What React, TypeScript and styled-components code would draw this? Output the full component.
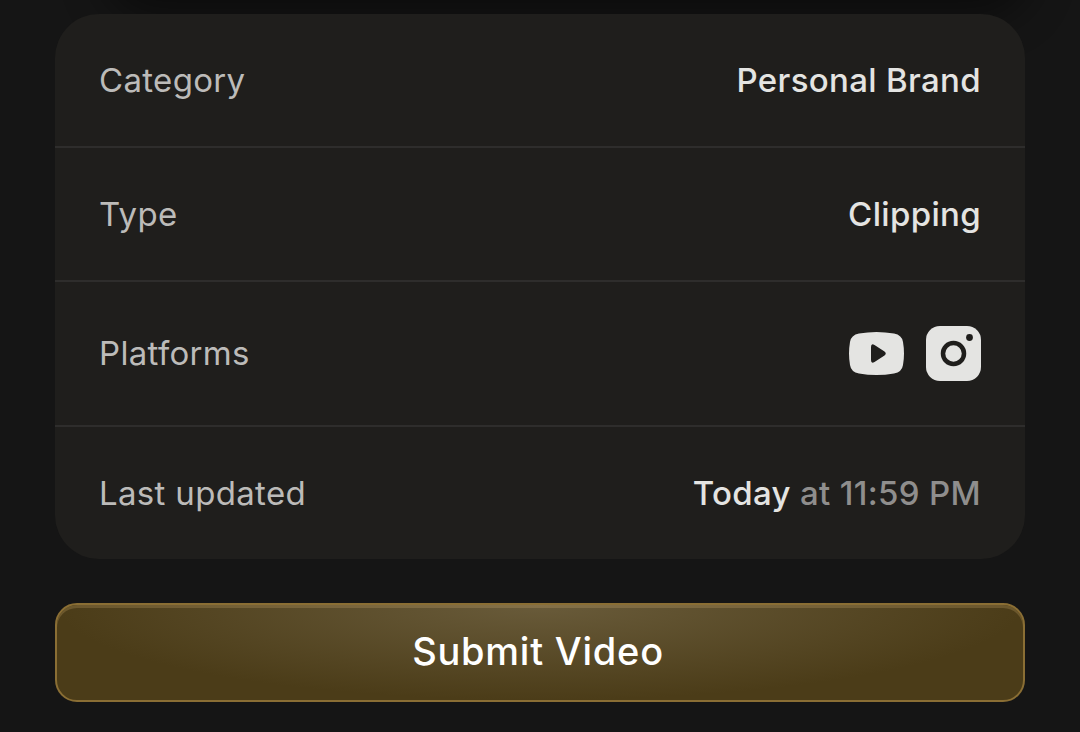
import React from 'react';
import styled, { createGlobalStyle } from 'styled-components';

const Global = createGlobalStyle`
  * { box-sizing: border-box; }
  body { margin: 0; background: #151515; font-family: Inter, sans-serif; }
`;
const Page = styled.main`
  position: relative;
  overflow: hidden;
  padding: 14px 55px 30px;
  /* shadow cast by the panel scrolled off above */
  &::before {
    content: '';
    position: absolute;
    top: -100px;
    left: 110px;
    right: 55px;
    height: 100px;
    border-radius: 44px;
    box-shadow: 0 11px 44px 6px rgba(0, 0, 0, 0.45);
  }
`;
const Card = styled.dl`
  position: relative;
  margin: 0;
  border-radius: 44px;
  background: #1f1e1c;
  overflow: hidden;
`;
const Row = styled.div<{ $tall?: boolean }>`
  display: flex;
  align-items: center;
  justify-content: space-between;
  padding: 44px;
  font-size: 33px;
  line-height: ${p => (p.$tall ? 55 : 44)}px;
  letter-spacing: 0.01em;
  & + & { border-top: 2px solid #2e2d2c; }
`;
const Label = styled.dt`color: #bcbbb9;`;
const Value = styled.dd`
  display: flex;
  gap: 22px;
  margin: 0;
  color: #e4e4e2;
  font-weight: 500;
`;
const Muted = styled.span`color: #8f8e8d;`;
const Icon = styled.svg`display: block; width: 55px; height: 55px;`;
const Submit = styled.button`
  display: block;
  width: 100%;
  height: 99px;
  margin-top: 44px;
  padding: 0 4px 4px 0;
  border: 2px solid #8a6e34;
  border-radius: 22px;
  color: #fff;
  font: 500 38px/44px Inter, sans-serif;
  letter-spacing: 0.02em;
  background: radial-gradient(ellipse 50% 100% at 50% 0, #695b3a, #4b3c18);
  box-shadow: inset 0 3px 0 rgba(255, 210, 140, 0.18);
`;

export default function App() {
  return (
    <Page>
      <Global />
      <Card>
        <Row><Label>Category</Label><Value>Personal Brand</Value></Row>
        <Row><Label>Type</Label><Value>Clipping</Value></Row>
        <Row $tall>
          <Label>Platforms</Label>
          <Value>
            <Icon viewBox="0 0 55 55" role="img" aria-label="YouTube">
              <path fill="#e4e4e2" fillRule="evenodd" d="M10 7.500Q27.500 4.500 45 7.500Q53 9 54 16Q56 27.500 54 39Q53 46 45 47.500Q27.500 50.500 10 47.500Q2 46 1 39Q-1 27.500 1 16Q2 9 10 7.500ZM22 21V34Q22 38 25.500 36L35.500 29.500Q38 27.500 35.500 25.500L25.500 19Q22 17 22 21Z" />
            </Icon>
            <Icon viewBox="0 0 55 55" role="img" aria-label="Instagram">
              <rect width="55" height="55" rx="14" fill="#e4e4e2" />
              <circle cx="27.500" cy="27.500" r="10.500" fill="none" stroke="#1f1e1c" strokeWidth="4.500" />
              <circle cx="43.500" cy="11.500" r="3.400" fill="#1f1e1c" />
            </Icon>
          </Value>
        </Row>
        <Row><Label>Last updated</Label><Value><span>Today <Muted>at 11:59 PM</Muted></span></Value></Row>
      </Card>
      <Submit type="button">Submit Video</Submit>
    </Page>
  );
}
